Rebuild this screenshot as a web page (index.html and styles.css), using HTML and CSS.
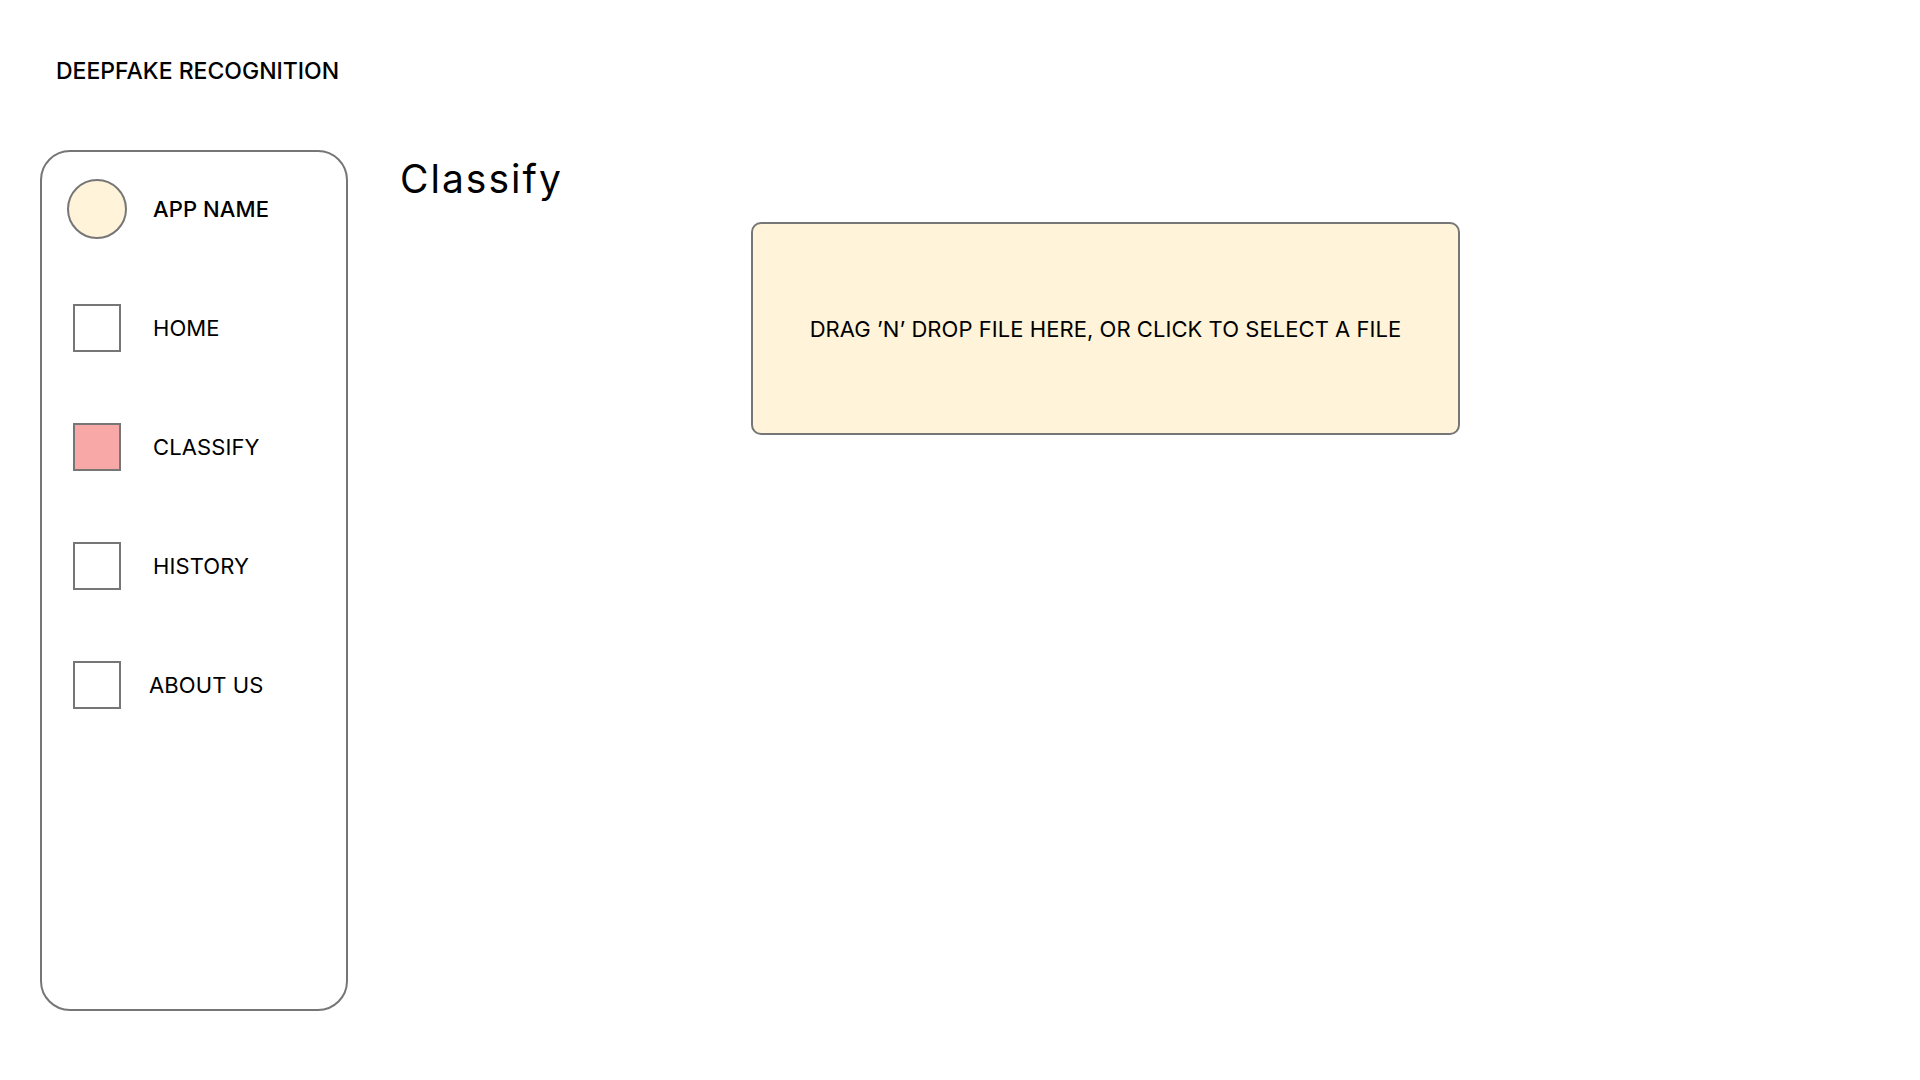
FILE: index.html
```html
<!DOCTYPE html>
<html lang="en">
<head>
<meta charset="utf-8">
<title>Deepfake Recognition - Classify</title>
<link rel="stylesheet" href="styles.css">
</head>
<body>
<div class="page">
  <header class="brand">DEEPFAKE RECOGNITION</header>
  <div class="layout">
    <nav class="sidebar">
      <div class="nav-item nav-app">
        <span class="icon-col"><span class="logo-circle"></span></span>
        <span class="nav-label nav-label-strong">APP NAME</span>
      </div>
      <div class="nav-item">
        <span class="icon-col"><span class="nav-box"></span></span>
        <span class="nav-label">HOME</span>
      </div>
      <div class="nav-item">
        <span class="icon-col"><span class="nav-box nav-box-active"></span></span>
        <span class="nav-label">CLASSIFY</span>
      </div>
      <div class="nav-item">
        <span class="icon-col"><span class="nav-box"></span></span>
        <span class="nav-label">HISTORY</span>
      </div>
      <div class="nav-item">
        <span class="icon-col"><span class="nav-box"></span></span>
        <span class="nav-label nav-label-shift">ABOUT US</span>
      </div>
    </nav>
    <main class="content">
      <h1 class="page-title">Classify</h1>
      <div class="dropzone">DRAG ’N’ DROP FILE HERE, OR CLICK TO SELECT A FILE</div>
    </main>
  </div>
</div>
</body>
</html>
```

FILE: styles.css
```css
* { box-sizing: border-box; }

html, body {
  margin: 0;
  padding: 0;
  background: #ffffff;
}

body {
  font-family: Inter, "Open Sans", "Liberation Sans", sans-serif;
  color: #000000;
  width: 1920px;
  height: 1080px;
  overflow: hidden;
}

.brand {
  height: 150px;
  padding: 57px 0 0 56px;
  font-size: 23px;
  line-height: 28px;
  font-weight: 500;
  letter-spacing: 0;
}

.layout {
  display: flex;
  gap: 52px;
  padding-left: 40px;
}

.sidebar {
  width: 308px;
  height: 861px;
  border: 2px solid #767676;
  border-radius: 30px;
  padding: 27px 0 0 25px;
  display: flex;
  flex-direction: column;
  gap: 59px;
}

.nav-item {
  height: 60px;
  display: flex;
  align-items: center;
  gap: 26px;
}

.icon-col {
  width: 60px;
  height: 60px;
  display: flex;
  align-items: center;
  justify-content: center;
}

.logo-circle {
  width: 60px;
  height: 60px;
  border-radius: 50%;
  border: 2px solid #767676;
  background: #fff3d9;
}

.nav-box {
  width: 48px;
  height: 48px;
  border: 2px solid #767676;
  background: #ffffff;
}

.nav-box-active {
  background: #f9a8a8;
}

.nav-label {
  font-size: 22px;
  font-weight: 400;
  letter-spacing: 0.1px;
}

.nav-label-strong {
  font-weight: 500;
}

.nav-label-shift {
  margin-left: -4px;
}

.content {
  flex: 1;
  padding-top: 5px;
}

.page-title {
  margin: 0;
  font-size: 39px;
  line-height: 48px;
  font-weight: 400;
  letter-spacing: 2px;
}

.dropzone {
  margin: 19px 0 0 351px;
  width: 709px;
  height: 213px;
  border: 2px solid #767676;
  border-radius: 10px;
  background: #fff3d9;
  display: flex;
  align-items: center;
  justify-content: center;
  font-size: 22px;
  letter-spacing: 0.05px;
}
```
